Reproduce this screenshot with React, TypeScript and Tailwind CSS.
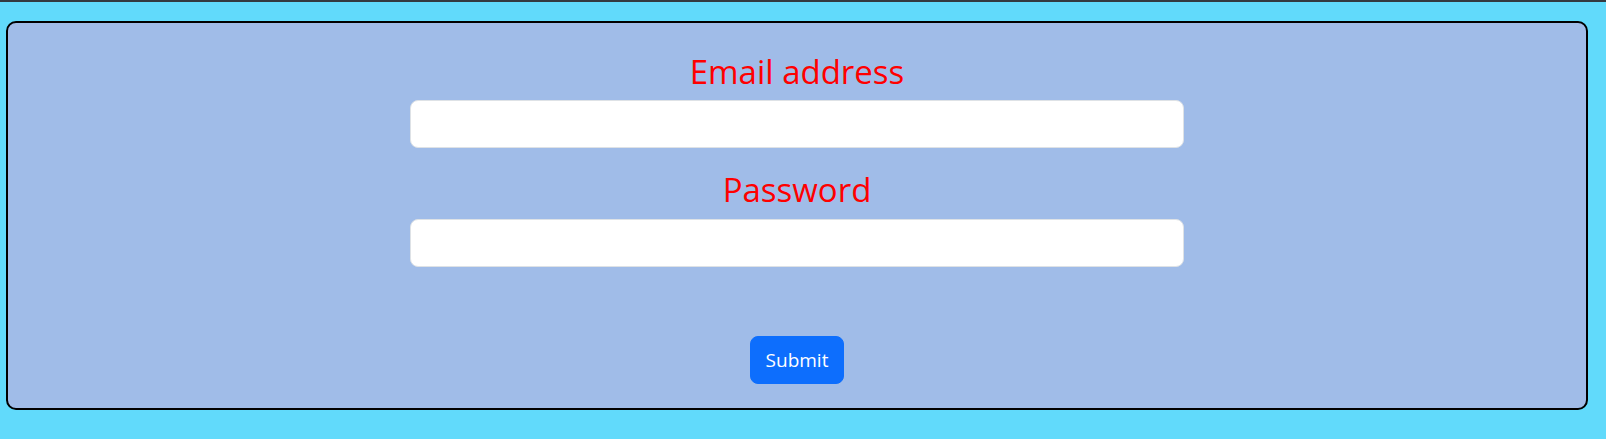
export default function App() {
  return (
    <div
      className="min-h-screen border-t-2 border-[#343a40] bg-[#61dafb] pt-[19px]"
      style={{ fontFamily: '"Open Sans", "Noto Sans", sans-serif' }}
    >
      {/* Login card */}
      <div className="ml-[6px] mr-[18px] rounded-[10px] border-2 border-black bg-[#a0bce8] pt-[30px] pb-[24px]">
        <form className="flex flex-col items-center" onSubmit={(e) => e.preventDefault()}>
          <label htmlFor="email" className="mb-[9px] text-[33px] leading-[38px] text-[#ff0000]">
            Email address
          </label>
          <input
            id="email"
            type="email"
            className="h-[48px] w-[774px] rounded-lg border border-[#dee2e6] bg-white px-4 text-xl outline-none"
          />

          <label htmlFor="password" className="mt-[23px] mb-[10px] text-[33px] leading-[38px] text-[#ff0000]">
            Password
          </label>
          <input
            id="password"
            type="password"
            className="h-[48px] w-[774px] rounded-lg border border-[#dee2e6] bg-white px-4 text-xl outline-none"
          />

          <button
            type="submit"
            className="mt-[69px] h-[48px] w-[94px] rounded-lg border border-[#0d6efd] bg-[#0d6efd] text-[19px] text-white"
          >
            Submit
          </button>
        </form>
      </div>
    </div>
  );
}
